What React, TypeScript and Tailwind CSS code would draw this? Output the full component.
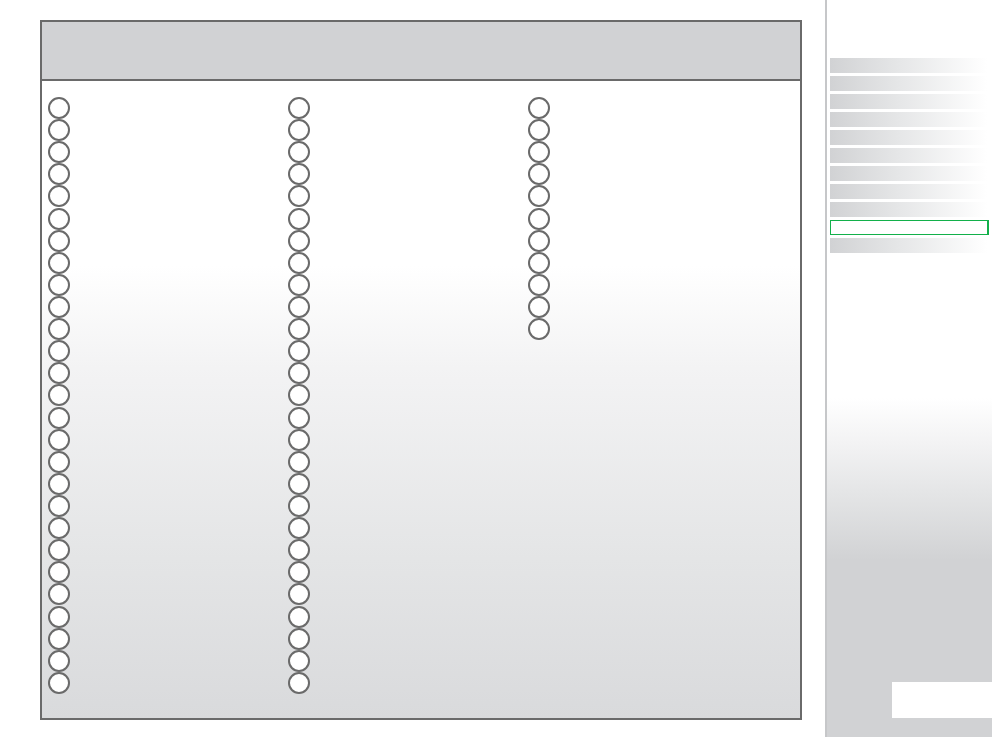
const columns = [27, 27, 11];
const menuItems = Array.from({ length: 11 }, (_, i) => i);
const ACTIVE = 9;

function Ring() {
  return (
    <div className="h-[22.12px]">
      <div className="w-[22px] h-[22px] rounded-full border-2 border-[#6a6a6a] bg-white" />
    </div>
  );
}

export default function App() {
  return (
    <div className="w-[992px] h-[737px] flex bg-white overflow-hidden">
      {/* main panel */}
      <div className="w-[825px] pl-[40px] pt-[20px]">
        <div className="w-[762px] h-[700px] border-2 border-[#6a6a6a] flex flex-col">
          <div className="h-[59px] bg-[#d1d2d4] border-b-2 border-[#6a6a6a]" />
          <div className="flex-1 flex pl-[6px] pt-[16px] bg-[linear-gradient(to_bottom,#ffffff_0%,#ffffff_29%,#f3f3f4_45%,#e4e5e6_75%,#d9dadc_100%)]">
            {columns.map((count, c) => (
              <div key={c} className="w-[240px] flex flex-col">
                {Array.from({ length: count }, (_, i) => (
                  <Ring key={i} />
                ))}
              </div>
            ))}
          </div>
        </div>
      </div>

      {/* sidebar */}
      <div className="w-[167px] h-full border-l-2 border-[#c6c7c9] flex flex-col bg-[linear-gradient(to_bottom,#ffffff_0%,#ffffff_54%,#f3f3f4_60%,#e4e5e6_67%,#d1d2d4_76%,#d1d2d4_100%)]">
        <div className="flex flex-col gap-[3px] pt-[58px] pl-[3px]">
          {menuItems.map((i) =>
            i === ACTIVE ? (
              <div key={i} className="h-[15px] w-[159px] border border-r-2 border-[#12b04a] bg-white" />
            ) : (
              <div
                key={i}
                className="h-[15px] w-[157px] bg-[linear-gradient(to_right,#d1d2d4_0%,#e6e7e8_45%,#ffffff_100%)]"
              />
            )
          )}
        </div>
        <div className="flex-1" />
        <div className="flex justify-end pb-[19px]">
          <div className="w-[100px] h-[36px] bg-white" />
        </div>
      </div>
    </div>
  );
}
